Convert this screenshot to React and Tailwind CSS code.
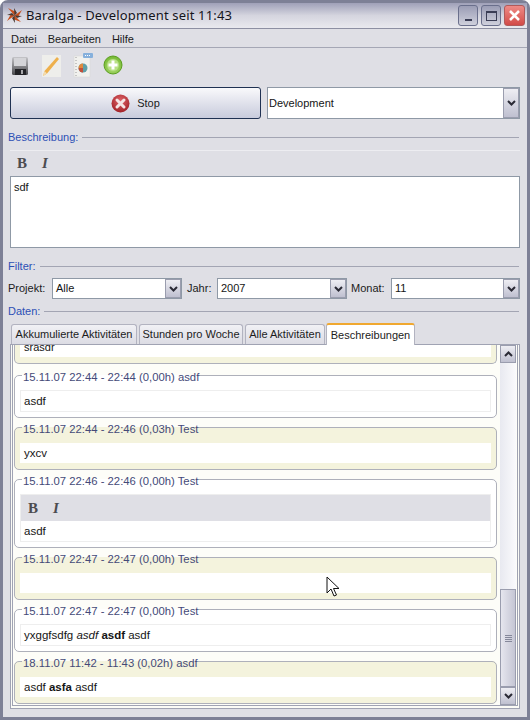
import React from 'react';

const AppIcon = () => (
  <svg width="17" height="17" viewBox="0 0 17 17">
    <path d="M8.5 8.5 L2 1 L10 5 Z M8.5 8.5 L16 3 L12 10 Z M8.5 8.5 L15 15 L7 12 Z M8.5 8.5 L1 14 L5 7 Z" fill="#c8501e" />
    <path d="M8.5 8.5 L8 1 L11 6 Z M8.5 8.5 L16 9 L11 11 Z M8.5 8.5 L9 16 L6 11 Z M8.5 8.5 L1 8 L6 6 Z" fill="#4a3a34" />
  </svg>
);

const SaveIcon = () => (
  <svg width="19" height="21" viewBox="0 0 19 21">
    <defs>
      <linearGradient id="disk" x1="0" y1="0" x2="0" y2="1">
        <stop offset="0" stopColor="#c4c4c8" />
        <stop offset="1" stopColor="#4a4a4e" />
      </linearGradient>
    </defs>
    <rect x="1" y="2" width="16" height="18" rx="1.5" fill="url(#disk)" />
    <rect x="3" y="3" width="12" height="8" fill="#d4d4d8" />
    <rect x="4" y="14" width="11" height="6" fill="#232327" />
    <rect x="10" y="15" width="2" height="4" fill="#a8a8ac" />
  </svg>
);

const PencilIcon = () => (
  <svg width="21" height="24" viewBox="0 0 21 24">
    <rect x="1" y="1" width="19" height="22" fill="#eeeeeb" />
    <path d="M2 22 L3.5 17 L16 3 L18 5 L6 19.5 Z" fill="#eeb04c" />
    <path d="M2 22 L3.5 17 L6 19.5 Z" fill="#f3dcae" />
  </svg>
);

const ReportIcon = () => (
  <svg width="20" height="25" viewBox="0 0 20 25">
    <rect x="1" y="3" width="16" height="21" fill="#f1f1ee" stroke="#d5d5d5" strokeWidth="0.5" />
    <path d="M3 4 V23" stroke="#9a9a9a" strokeWidth="1" strokeDasharray="1 2" />
    <rect x="10" y="0" width="10" height="5" rx="1" fill="#86b0dc" />
    <path d="M12 2.5 H18" stroke="#fff" strokeWidth="1" strokeDasharray="1 1" />
    <circle cx="10" cy="15" r="4.5" fill="#5fa0a8" />
    <path d="M10 15 V10.5 A4.5 4.5 0 0 0 5.5 15 Z" fill="#e08a3c" />
    <path d="M10 15 H5.5 A4.5 4.5 0 0 0 10 19.5 Z" fill="#c2503a" />
  </svg>
);

const AddIcon = () => (
  <svg width="20" height="21" viewBox="0 0 20 21">
    <defs>
      <radialGradient id="add" cx="0.5" cy="0.6" r="0.6">
        <stop offset="0" stopColor="#c4e88c" />
        <stop offset="1" stopColor="#6fb52c" />
      </radialGradient>
    </defs>
    <circle cx="10" cy="10" r="9" fill="url(#add)" stroke="#5ca020" strokeWidth="1" />
    <circle cx="10" cy="10" r="6" fill="#b9e086" />
    <path d="M10 5.5 V14.5 M5.5 10 H14.5" stroke="#fff" strokeWidth="3" />
  </svg>
);

const StopIcon = () => (
  <svg width="19" height="19" viewBox="0 0 19 19">
    <defs>
      <radialGradient id="stop" cx="0.5" cy="0.35" r="0.7">
        <stop offset="0" stopColor="#e0656a" />
        <stop offset="1" stopColor="#9c1c22" />
      </radialGradient>
    </defs>
    <circle cx="9.5" cy="9.5" r="9" fill="url(#stop)" />
    <path d="M6 6 L13 13 M13 6 L6 13" stroke="#f4e4e4" strokeWidth="3" strokeLinecap="round" />
  </svg>
);

const Chevron = ({ up }) => (
  <svg width="9" height="6" viewBox="0 0 9 6">
    <path d={up ? 'M1 5 L4.5 1.5 L8 5' : 'M1 1 L4.5 4.5 L8 1'} fill="none" stroke="#2a2a35" strokeWidth="2" />
  </svg>
);

const ArrowButton = ({ up, className }) => (
  <div className={`flex items-center justify-center border border-[#9a9dae] bg-gradient-to-b from-[#eeeef3] to-[#bfc0d0] ${className}`}>
    <Chevron up={up} />
  </div>
);

const SectionLabel = ({ text, className }) => (
  <div className={`flex items-center gap-1 h-4 pr-2 ${className}`}>
    <span className="text-[#2c4fb5]">{text}</span>
    <div className="flex-1 h-px bg-[#a3a5b3]" />
  </div>
);

const Combo = ({ value, className }) => (
  <div className={`flex h-[21px] bg-white border border-[#8f99a6] ${className}`}>
    <span className="flex-1 pl-[3px] leading-[19px] text-[#151515]">{value}</span>
    <ArrowButton className="w-[16px]" />
  </div>
);

const Tab = ({ text, className }) => (
  <div className={`h-[20px] flex items-center justify-center whitespace-nowrap rounded-t-[3px] border border-b-0 border-[#b2b3c0] bg-gradient-to-b from-[#f1f1f5] to-[#dcdce4] text-[#1c1c1c] ${className}`}>
    {text}
  </div>
);

const FormatBar = ({ className }) => (
  <div className={`flex items-center gap-[15px] font-['Liberation_Serif',serif] text-[15px] text-[#4c4c50] ${className}`}>
    <b>B</b>
    <b className="italic">I</b>
  </div>
);

const Entry = ({ title, yellow, children }) => (
  <fieldset className={`ml-px mr-[3px] px-[5px] shrink-0 rounded-[5px] border border-[#aeb0ba] ${yellow ? 'bg-[#f4f3dd] pb-[6px]' : 'bg-white pb-[5px]'}`}>
    <legend className="ml-[2px] pl-px pt-[4px] text-[11.3px] text-[#444a78] leading-[14px] whitespace-nowrap">{title}</legend>
    <div className={`bg-white ${yellow ? 'mt-[7px] pl-px' : 'mt-[6px] border border-[#eeeeee]'}`}>
      {children}
    </div>
  </fieldset>
);

const Line = ({ children }) => (
  <div className="h-[20px] pl-[3px] leading-[20px] text-[#151515] text-[11.5px]">{children}</div>
);

export default function App() {
  return (
    <div className="w-[530px] h-[720px] overflow-hidden bg-white font-['Liberation_Sans',sans-serif] text-[11px]">
      <div className="h-full flex flex-col rounded-t-[8px] border-[3px] border-[#7d8096] bg-[#dfdfe5] relative">
        {/* Title bar */}
        <div className="h-[26px] flex items-center pl-[3px] pr-[2px] bg-gradient-to-b from-[#9fa0b8] via-[#d5d5df] to-[#e9e9ee] border-b border-[#8d8fa2]">
          <AppIcon />
          <span className="ml-[3px] font-['Noto_Sans',sans-serif] text-[13px] tracking-[0.15px] text-[#14141c]">Baralga - Development seit 11:43</span>
          <div className="ml-auto flex gap-[3px]">
            <div className="w-[20px] h-[21px] rounded-[3px] border border-[#6a6f8c] bg-gradient-to-b from-[#9b9db5] to-[#cfd0dc] flex items-end justify-center pb-[4px]">
              <div className="w-[7px] h-[2px] bg-[#3a3d55]" />
            </div>
            <div className="w-[20px] h-[21px] rounded-[3px] border border-[#6a6f8c] bg-gradient-to-b from-[#9b9db5] to-[#cfd0dc] flex items-center justify-center">
              <div className="w-[11px] h-[10px] border border-t-[2px] border-[#3a3d55]" />
            </div>
            <div className="w-[21px] h-[21px] rounded-[3px] border border-[#b05a5a] bg-gradient-to-b from-[#ee8a86] to-[#d24a48] flex items-center justify-center">
              <svg width="13" height="13" viewBox="0 0 13 13">
                <path d="M2 2 L11 11 M11 2 L2 11" stroke="#fff" strokeWidth="2.5" />
              </svg>
            </div>
          </div>
        </div>

        {/* Menu */}
        <div className="h-[19px] flex items-center gap-[11px] pl-[8px] pt-[2px] border-b border-[#a5a7b5] text-[#1b1b1b]">
          <span>Datei</span>
          <span>Bearbeiten</span>
          <span>Hilfe</span>
        </div>

        {/* Toolbar */}
        <div className="h-[35px] flex items-center pl-[8px] gap-[11px]">
          <SaveIcon />
          <PencilIcon />
          <ReportIcon />
          <div className="-ml-px">
            <AddIcon />
          </div>
        </div>

        {/* Stop + project */}
        <div className="flex gap-[6px] pl-[7px] pr-[7px] h-[32px] mt-[4px]">
          <div className="w-[251px] flex items-center justify-center gap-[7px] rounded-[3px] border border-[#1f3152] bg-gradient-to-b from-[#f9f9fb] to-[#c8cbdc] text-[#1b1b1b]">
            <StopIcon />
            <span>Stop</span>
          </div>
          <div className="flex-1 flex bg-white border border-[#8f99a6]">
            <span className="flex-1 pl-[1px] leading-[30px] text-[#151515]">Development</span>
            <ArrowButton className="w-[16px]" />
          </div>
        </div>

        <SectionLabel text="Beschreibung:" className="mt-[10px] pl-[5px]" />

        <div className="mx-[7px] mt-[5px]">
          <FormatBar className="h-[26px] pl-[7px] pb-px border-t border-[#ededf1]" />
          <div className="h-[72px] bg-white border border-[#8f99a6] pl-[3px] pt-[2px] text-[#151515]">sdf</div>
        </div>

        <SectionLabel text="Filter:" className="mt-[10px] pl-[5px]" />

        {/* Filter row */}
        <div className="flex items-center pl-[5px] pr-[7px] mt-[4px] text-[#1b1b1b]">
          <span className="w-[44px]">Projekt:</span>
          <Combo value="Alle" className="w-[130px]" />
          <span className="ml-[5px] w-[30px]">Jahr:</span>
          <Combo value="2007" className="w-[130px]" />
          <span className="ml-[4px] w-[40px]">Monat:</span>
          <Combo value="11" className="flex-1" />
        </div>

        <SectionLabel text="Daten:" className="mt-[4px] pl-[5px]" />

        {/* Tabs */}
        <div className="flex items-end gap-[2px] h-[22px] pl-[8px] mt-[3px] relative z-10">
          <Tab text="Akkumulierte Aktivitäten" className="w-[126px]" />
          <Tab text="Stunden pro Woche" className="w-[104px]" />
          <Tab text="Alle Aktivitäten" className="w-[80px] mr-[-1px]" />
          <div className="h-[22px] w-[89px] -mb-px flex items-center justify-center whitespace-nowrap rounded-t-[3px] border border-b-0 border-[#b2b3c0] border-t-2 border-t-[#f0a830] bg-white text-[#1c1c1c]">
            Beschreibungen
          </div>
        </div>

        {/* Content, a double frame around the scrolling list */}
        <div className="mx-[7px] w-[510px] h-[365px] border border-[#a0a3b3] bg-[#fbfbf6] px-px pb-[2px]">
          <div className="h-[361px] flex border border-t-0 border-[#a0a3b3] bg-[#fdfdf8] overflow-hidden">
            <div className="flex-1 overflow-hidden flex flex-col">
              <div className="h-[19px] shrink-0 overflow-hidden ml-px mr-[3px] mb-[2px] px-[5px] rounded-b-[5px] border border-t-0 border-[#aeb0ba] bg-[#f4f3dd]">
                <div className="h-[12px] bg-white overflow-hidden pl-[4px] text-[#151515] leading-[4px]">srasdr</div>
              </div>
              <Entry title="15.11.07 22:44 - 22:44 (0,00h) asdf">
                <Line>asdf</Line>
              </Entry>
              <Entry title="15.11.07 22:44 - 22:46 (0,03h) Test" yellow>
                <Line>yxcv</Line>
              </Entry>
              <Entry title="15.11.07 22:46 - 22:46 (0,00h) Test">
                <FormatBar className="h-[26px] pl-[7px] bg-[#dfdfe5]" />
                <Line>asdf</Line>
              </Entry>
              <Entry title="15.11.07 22:47 - 22:47 (0,00h) Test" yellow>
                <Line />
              </Entry>
              <Entry title="15.11.07 22:47 - 22:47 (0,00h) Test">
                <Line>yxggfsdfg <i>asdf</i> <b>asdf</b> asdf</Line>
              </Entry>
              <Entry title="18.11.07 11:42 - 11:43 (0,02h) asdf" yellow>
                <Line>asdf <b>asfa</b> asdf</Line>
              </Entry>
            </div>

            {/* Scrollbar */}
            <div className="w-[16px] mr-px flex flex-col bg-gradient-to-r from-[#e8e9f0] to-[#fafafc]">
              <ArrowButton up className="h-[18px] shrink-0" />
              <div className="flex-1" />
              <div className="h-[98px] border border-[#9a9dae] bg-gradient-to-r from-[#e6e6ee] to-[#c5c6d4] flex flex-col items-center justify-center gap-px">
                <div className="w-[7px] h-px bg-[#85889a]" />
                <div className="w-[7px] h-px bg-[#85889a]" />
                <div className="w-[7px] h-px bg-[#85889a]" />
                <div className="w-[7px] h-px bg-[#85889a]" />
              </div>
              <ArrowButton className="h-[18px] shrink-0" />
            </div>
          </div>
        </div>

        {/* Mouse cursor */}
        <svg className="absolute left-[323px] top-[573px]" width="14" height="21" viewBox="0 0 14 21">
          <path d="M1 1 V17 L5 13 L8 20 L10.5 19 L7.5 12.5 L13 12.5 Z" fill="#fff" stroke="#111" strokeWidth="1" />
        </svg>
      </div>
    </div>
  );
}
